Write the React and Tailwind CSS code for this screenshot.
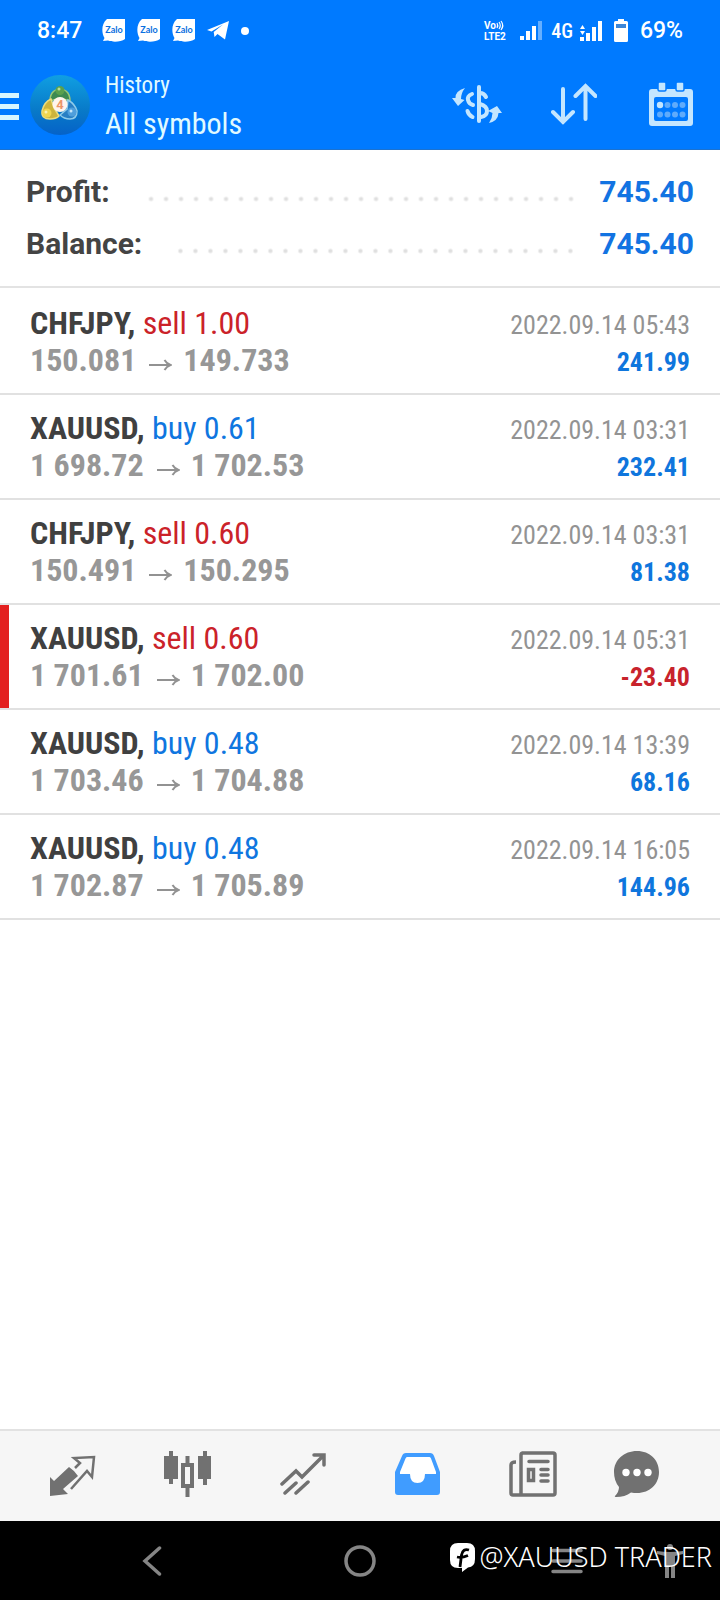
import React from "react";

const summary = [
  { label: "Profit:", value: "745.40" },
  { label: "Balance:", value: "745.40" },
];

const deals = [
  { symbol: "CHFJPY", side: "sell", volume: "1.00", open: "150.081", close: "149.733", time: "2022.09.14 05:43", profit: "241.99" },
  { symbol: "XAUUSD", side: "buy", volume: "0.61", open: "1 698.72", close: "1 702.53", time: "2022.09.14 03:31", profit: "232.41" },
  { symbol: "CHFJPY", side: "sell", volume: "0.60", open: "150.491", close: "150.295", time: "2022.09.14 03:31", profit: "81.38" },
  { symbol: "XAUUSD", side: "sell", volume: "0.60", open: "1 701.61", close: "1 702.00", time: "2022.09.14 05:31", profit: "-23.40", marked: true },
  { symbol: "XAUUSD", side: "buy", volume: "0.48", open: "1 703.46", close: "1 704.88", time: "2022.09.14 13:39", profit: "68.16" },
  { symbol: "XAUUSD", side: "buy", volume: "0.48", open: "1 702.87", close: "1 705.89", time: "2022.09.14 16:05", profit: "144.96" },
];

function ZaloBadge() {
  return (
    <svg width="23" height="23" viewBox="0 0 23 23" aria-label="Zalo">
      <path d="M5 0h18v20c-4 3-12 3.500-17 1.500L1 22l1.500-3C-.5 14-1 5 5 0z" fill="#fff" />
      <text x="12" y="14" textAnchor="middle" fontSize="9" fontWeight="700" fontFamily="Lato, sans-serif" fill="#0a6fe0">Zalo</text>
    </svg>
  );
}

function StatusBar() {
  return (
    <div className="flex h-[60px] items-center justify-between px-[37px] pt-px font-medium text-white">
      <div className="flex items-center">
        <span className="w-[65px] text-[23px] leading-7">8:47</span>
        <div className="flex items-center gap-3">
          <ZaloBadge />
          <ZaloBadge />
          <ZaloBadge />
          <svg width="22" height="19" viewBox="0 0 22 19" fill="#fff">
            <path d="M0 9 22 0l-4 18.500-7.500-5.500-3 3-.8-5L16 3.500 4.500 10.500z" />
          </svg>
          <span className="size-2 rounded-full bg-white" />
        </div>
      </div>
      <div className="flex items-center">
        <svg width="28" height="21" viewBox="0 0 28 21" fill="#fff" fontFamily="Roboto, sans-serif" fontWeight="700">
          <text x="1" y="9" fontSize="10">Vo</text>
          <text x="1" y="20" fontSize="10">LTE2</text>
          <path d="M14 3q1.500 2.500 0 5M16 2q2.500 3.500 0 7M18 1q3.500 4.500 0 9" fill="none" stroke="#fff" strokeWidth="1.200" />
        </svg>
        <svg className="ml-[9px]" width="22" height="19" viewBox="0 0 22 19" fill="#fff">
          <path d="M0 15h4v4H0zM6 10h4v9H6zM12 5h4v14h-4z" />
          <path d="M18 0h4v19h-4z" opacity=".4" />
        </svg>
        <span className="ml-[9px] font-['Roboto_Condensed','Liberation_Sans_Narrow',sans-serif] text-[20px] leading-7">4G</span>
        <svg className="ml-[7px]" width="22" height="20" viewBox="0 0 22 20" fill="#fff">
          <path d="M0 16h4v4H0zM6 12h4v8H6zM12 6h4v14h-4zM18 0h4v20h-4zM0 8l2.500-4L5 8zM0 10h5l-2.500 4z" />
        </svg>
        <svg className="ml-3" width="14" height="23" viewBox="0 0 14 23">
          <path d="M4 0h6v2h2.500Q14 2 14 3.500v18q0 1.500-1.500 1.500h-11Q0 23 0 21.500v-18Q0 2 1.500 2H4z" fill="#fff" />
          <path d="M2 5h10v4H2z" fill="#3b86d8" />
        </svg>
        <span className="ml-3 text-[23px] leading-7">69%</span>
      </div>
    </div>
  );
}

function AppLogo() {
  return (
    <svg width="60" height="60" viewBox="0 0 60 60">
      <defs>
        <linearGradient id="disc" x1="0" y1="0" x2="0" y2="1">
          <stop offset="0" stopColor="#109fe2" />
          <stop offset=".6" stopColor="#0879c8" />
          <stop offset="1" stopColor="#0562c8" />
        </linearGradient>
      </defs>
      <circle cx="30" cy="30" r="30" fill="url(#disc)" />
      <path d="M24 16q-4 3-4 10l10-3 10 3q0-7-4-10-6-4-12 0z" fill="#3d8a52" stroke="#9cc876" strokeWidth="1.500" />
      <path d="M21 24q-7 3-9 12-1 8 8 8 6 0 9-3l-5-8z" fill="#cdb43c" stroke="#ecdd7d" strokeWidth="1.500" />
      <path d="M38 25q7 4 9 11 0 8-7 8-6 0-10-4l7-6z" fill="#287fc4" stroke="#8ecbea" strokeWidth="1.500" />
      <circle cx="30" cy="15.500" r="4.500" fill="#5aa04e" />
      <circle cx="17" cy="38" r="4.500" fill="#f0d650" />
      <circle cx="42" cy="37" r="4.500" fill="#4f9fdc" />
      <circle cx="29" cy="14" r="1.500" fill="#b4dc96" />
      <circle cx="16" cy="37" r="1.500" fill="#fbf2b4" />
      <circle cx="41" cy="36" r="1.500" fill="#c6e7fa" />
      <circle cx="30" cy="29.500" r="7.500" fill="#fff4ec" />
      <text x="30" y="34" textAnchor="middle" fontSize="13" fontWeight="700" fontFamily="Roboto, sans-serif" fill="#ec9468">4</text>
    </svg>
  );
}

function Header() {
  return (
    <header className="border-b border-[#1c72cf] bg-[#007aff]">
      <StatusBar />
      <div className="flex h-[89px] items-center pr-[27px] text-[#e0faff]">
        <button aria-label="Open menu" className="flex flex-col gap-[6px] pt-[4px]">
          <span className="h-[5px] w-[19px] bg-[#d8f6ff]" />
          <span className="h-[5px] w-[19px] bg-[#d8f6ff]" />
          <span className="h-[5px] w-[19px] bg-[#d8f6ff]" />
        </button>
        <span className="ml-[11px]"><AppLogo /></span>
        <div className="ml-[15px] flex-1 pt-1 font-['Roboto_Condensed','Liberation_Sans_Narrow',sans-serif]">
          <p className="text-[23px] leading-[34px]">History</p>
          <h1 className="text-[30px] leading-[42px]">All symbols</h1>
        </div>
        <div className="flex items-center gap-[49px] pb-px">
          <button aria-label="Currency">
            <svg width="50" height="40" viewBox="0 0 50 40" fill="none" stroke="#c4e6ff" strokeWidth="4" strokeLinecap="round">
              <path d="M27 3v34" />
              <path d="M20 10q-5 2-4 6 1 4 5 5M15.500 27q1 4 5 6M28 9q4 0 6 4M28 20q7 2 7 7 0 5-6 6" />
              <path d="M13 4Q3 7 3.500 14L0 14l6 8 6.500-6-3.500-1Q9 9 13 4zM37 39q9-2 9.500-10l3.500 0-5-7-9 5 4.500 2q0 5-3.500 10z" fill="#c4e6ff" stroke="none" />
            </svg>
          </button>
          <button aria-label="Sort">
            <svg width="46" height="42" viewBox="0 0 46 42" fill="none" stroke="#c4e6ff" strokeWidth="4" strokeLinecap="round">
              <path d="M12 6v33M2 29l10 10 10-10M34.500 36V3M24.500 13l10-10 10 10" />
            </svg>
          </button>
          <button aria-label="Choose period" className="ml-[3px]">
            <svg width="44" height="46" viewBox="0 0 44 46">
              <path fillRule="evenodd" d="M3 8h38q3 0 3 3v31q0 3-3 3H3q-3 0-3-3V11q0-3 3-3zm4 8q-2 0-2 2v20q0 2 2 2h30q2 0 2-2V18q0-2-2-2z" fill="#c4e6ff" />
              <path d="M10.500 1h5q1.500 0 1.500 1.500v6q0 1.500-1.500 1.500h-5Q9 10 9 8.500v-6Q9 1 10.500 1zM28.500 1h5q1.500 0 1.500 1.500v6q0 1.500-1.500 1.500h-5q-1.500 0-1.500-1.500v-6Q27 1 28.500 1z" fill="#c4e6ff" stroke="#007aff" strokeWidth="1.500" />
              <g fill="#5fabfb">
                <circle cx="18.500" cy="24" r="3" /><circle cx="26" cy="24" r="3" /><circle cx="33.500" cy="24" r="3" />
                <circle cx="11" cy="33.500" r="3" /><circle cx="18.500" cy="33.500" r="3" /><circle cx="26" cy="33.500" r="3" /><circle cx="33.500" cy="33.500" r="3" />
              </g>
              <circle cx="11" cy="24" r="3.200" fill="#c4e6ff" />
            </svg>
          </button>
        </div>
      </div>
    </header>
  );
}

function Summary() {
  return (
    <dl className="border-b-2 border-[#e3e3e3] px-[26px] py-4 text-[30px] font-bold leading-[52px]">
      {summary.map((item) => (
        <div key={item.label} className="flex items-center">
          <dt className="text-[#444]">{item.label}</dt>
          <span className="ml-[33px] mr-[21px] mt-[14px] h-[6px] flex-1 bg-[radial-gradient(circle,#dfdfdf_1px,transparent_3px)] bg-[length:15px_6px] bg-right bg-repeat-x" />
          <dd className="text-[#1273e2]">{item.value}</dd>
        </div>
      ))}
    </dl>
  );
}

function DealRow({ deal }) {
  const sideColor = deal.side === "sell" ? "text-[#cb2229]" : "text-[#0f76e0]";
  const profitColor = deal.profit.startsWith("-") ? "text-[#c8232c]" : "text-[#0f76dd]";
  const edge = deal.marked ? "border-[#e3201f]" : "border-transparent";
  return (
    <li className="border-b-2 border-[#e1e1e1]">
      <div className={"border-l-[9px] pb-[14px] pl-[21px] pr-[30px] pt-[15px] font-['Roboto_Condensed','Liberation_Sans_Narrow',sans-serif] " + edge}>
        <div className="flex items-baseline justify-between">
          <p className="text-[32px] leading-[37px] text-[#404040]">
            <strong className="font-bold">{deal.symbol},</strong>{" "}
            <span className={sideColor}>{deal.side} {deal.volume}</span>
          </p>
          <time className="text-[26px] leading-8 text-[#939393]">{deal.time}</time>
        </div>
        <div className="flex items-baseline justify-between font-bold">
          <p className="flex items-baseline text-[32px] leading-[37px] text-[#979797]">
            {deal.open}
            <svg className="ml-[13px] mr-[11px]" width="23" height="12" viewBox="0 0 23 12" fill="none" stroke="#929292" strokeWidth="2">
              <path d="M0 6h20M15.500 1q2 3.500 6 5-4 1.500-6 5" />
            </svg>
            {deal.close}
          </p>
          <span className={"text-[26px] leading-8 " + profitColor}>{deal.profit}</span>
        </div>
      </div>
    </li>
  );
}

const tabs = [
  {
    label: "Quotes",
    icon: (
      <svg width="46" height="46" viewBox="0 0 46 46">
        <path d="M0 26l4 4 15-14q6 4 9 9L13 38l5 5-18 2z" fill="#717171" />
        <path d="M25 17l5-5-6-5 20-1-2 20-5-6-16 18" fill="none" stroke="#717171" strokeWidth="2.500" />
      </svg>
    ),
  },
  {
    label: "Charts",
    icon: (
      <svg width="47" height="46" viewBox="0 0 47 46" fill="#717171">
        <path d="M5 0h4v5h5v23H9v5H5v-5H0V5h5zM39 0h4v5h4v23h-4v6h-4v-6h-5V5h5z" />
        <path fillRule="evenodd" d="M21.500 5h4v7H30v25h-4.500v9h-4v-9H17V12h4.500zM21 16v17h5V16z" />
      </svg>
    ),
  },
  {
    label: "Trade",
    icon: (
      <svg width="46" height="46" viewBox="0 0 46 46" fill="none" stroke="#717171" strokeWidth="3.500" strokeLinecap="round">
        <path d="M2 33l14-13 6 6L43 5M34 4h10v10M5 42l11-10M16 42l12-11" />
      </svg>
    ),
  },
  {
    label: "History",
    icon: (
      <svg width="46" height="46" viewBox="0 0 46 46">
        <path d="M11 2h24q3 0 4 3l6 16v20q0 3-3 3H3q-3 0-3-3V21L7 5q1-3 4-3z" fill="#409cff" />
        <path d="M12 6h22.500Q35.500 6 36 7.500L41 21v2H30q0 9-7.500 9T15 23H5v-2l5.500-13.500Q11 6 12 6z" fill="#fff" />
      </svg>
    ),
  },
  {
    label: "News",
    icon: (
      <svg width="48" height="46" viewBox="0 0 48 46" fill="none" stroke="#717171" strokeWidth="3.500">
        <path d="M13 2h31q2 0 2 2v38q0 2-2 2H4q-2 0-2-2V14q0-3 5-3M12 44V4q0-2 2-2" />
        <path d="M20 10.500h19M32 18.500h7M32 24h7M32 30h7" strokeLinecap="round" />
        <path d="M19.500 18.500h5v11h-5z" />
      </svg>
    ),
  },
  {
    label: "Messages",
    icon: (
      <svg width="46" height="46" viewBox="0 0 46 46">
        <path d="M23 0c13 0 22 9 22 21s-9 21-22 21q-3 0-6-.5Q11 46 2 46q-2 0-1-1 4-4 4-9Q0 30 0 21C0 9 10 0 23 0z" fill="#717171" />
        <g fill="#fff"><circle cx="12" cy="21.500" r="3.700" /><circle cx="23" cy="21.500" r="3.700" /><circle cx="34" cy="21.500" r="3.700" /></g>
      </svg>
    ),
  },
];

function TabBar() {
  return (
    <nav className="grid grid-cols-[115fr_115fr_115fr_115fr_115fr_93fr] items-center border-t-2 border-[#e2e2e2] bg-[#f6f6f6] pb-6 pl-[15px] pr-[37px] pt-5">
      {tabs.map((tab) => (
        <button key={tab.label} aria-label={tab.label} className="flex justify-center">
          {tab.icon}
        </button>
      ))}
    </nav>
  );
}

function SystemBar() {
  return (
    <div className="relative grid h-[79px] grid-cols-[108fr_308fr_106fr_100fr] items-center bg-black pl-[98px]">
      <button aria-label="Back" className="flex justify-center">
        <svg width="20" height="30" viewBox="0 0 20 30" fill="none" stroke="#858585" strokeWidth="3.500" strokeLinecap="round">
          <path d="M17.500 2L3 15l14.500 13" />
        </svg>
      </button>
      <button aria-label="Home" className="flex justify-center">
        <svg width="32" height="32" viewBox="0 0 32 32" fill="none" stroke="#858585" strokeWidth="3.500">
          <circle cx="16" cy="16" r="14" />
        </svg>
      </button>
      <button aria-label="Recent apps" className="flex justify-center">
        <svg width="32" height="26" viewBox="0 0 32 26" fill="none" stroke="#858585" strokeWidth="3.500" strokeLinecap="round">
          <path d="M2 2.500h28M2 13h28M2 23.500h28" />
        </svg>
      </button>
      <button aria-label="Accessibility" className="flex justify-center">
        <svg width="26" height="34" viewBox="0 0 26 34" fill="#858585">
          <circle cx="13" cy="3" r="3" />
          <path d="M0 7q13 2 26 0v3l-8 2v22h-4V22h-2v12H8V12L0 10z" />
        </svg>
      </button>
      <div className="absolute right-2 top-[18px] flex items-center gap-1 font-['Noto_Sans',sans-serif] text-[27px] font-light leading-9 text-white">
        <svg width="26" height="29" viewBox="0 0 26 29">
          <path d="M8 0h9q8 0 8 8v8q0 8-7 8.500L12 29v-4H8q-8 0-8-8V8q0-8 8-8z" fill="#fff" />
          <path d="M19 7q-6-2-7.500 5L10 24M7 14q5 1 11-1.500" fill="none" stroke="#000" strokeWidth="2.800" />
        </svg>
        <span>@XAUUSD TRADER</span>
      </div>
    </div>
  );
}

export default function App() {
  return (
    <div className="flex min-h-screen flex-col bg-white font-[Roboto,sans-serif]">
      <Header />
      <main className="flex-1">
        <Summary />
        <ul className="pt-0.5">
          {deals.map((deal, i) => (
            <DealRow key={i} deal={deal} />
          ))}
        </ul>
      </main>
      <TabBar />
      <SystemBar />
    </div>
  );
}
